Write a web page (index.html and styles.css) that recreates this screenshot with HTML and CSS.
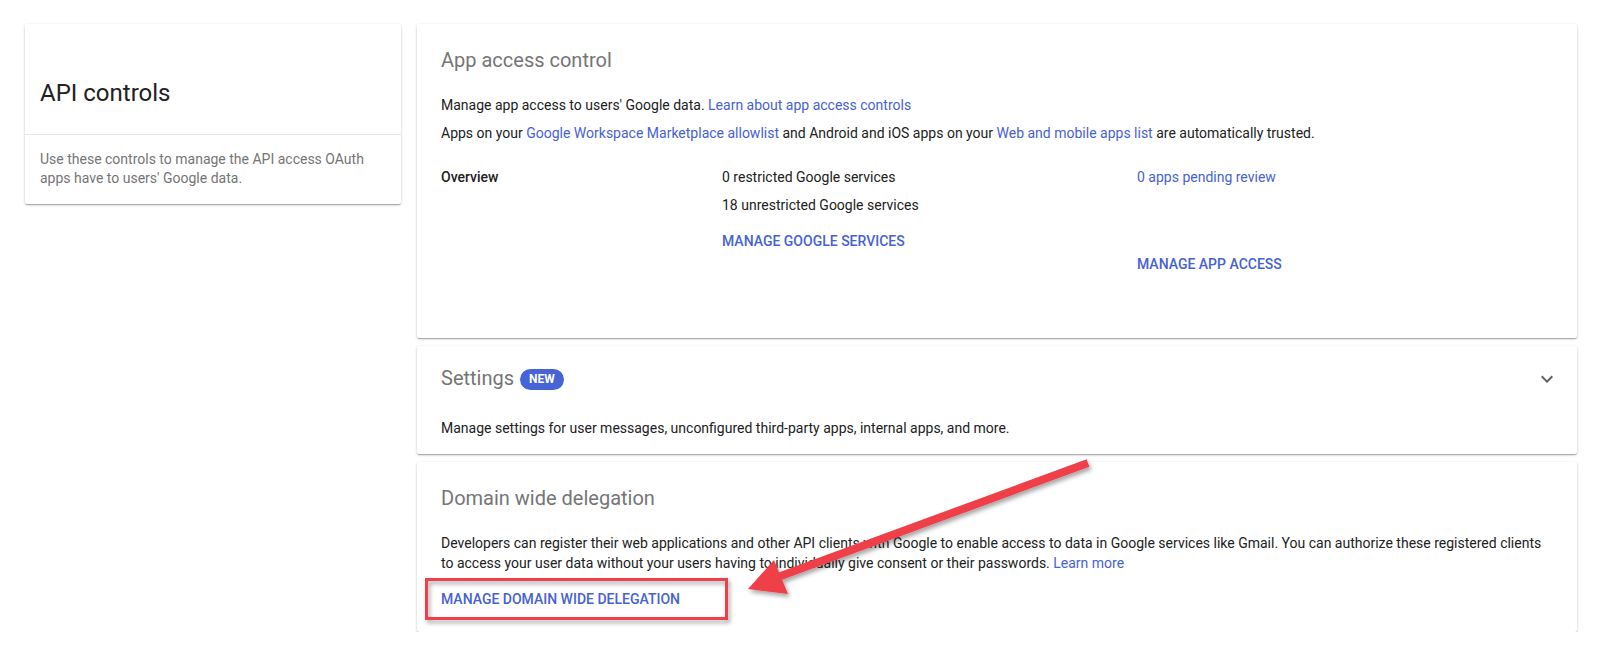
FILE: index.html
```html
<!DOCTYPE html>
<html lang="en">
<head>
  <meta charset="utf-8">
  <title>API controls</title>
  <link rel="stylesheet" href="styles.css">
</head>
<body>
  <div class="page">
    <section class="card intro">
      <div class="intro-head">
        <h1>API controls</h1>
      </div>
      <p class="intro-text">Use these controls to manage the API access OAuth apps have to users' Google data.</p>
    </section>

    <main class="panels">
      <section class="card panel panel-access">
        <h2 class="panel-title">App access control</h2>
        <p class="panel-text lead">Manage app access to users' Google data. <a href="#">Learn about app access controls</a></p>
        <p class="panel-text">Apps on your <a href="#">Google Workspace Marketplace allowlist</a> and Android and iOS apps on your <a href="#">Web and mobile apps list</a> are automatically trusted.</p>
        <div class="overview">
          <div class="overview-label">Overview</div>
          <div class="overview-col">
            <p>0 restricted Google services</p>
            <p class="next">18 unrestricted Google services</p>
            <a class="action" href="#">Manage Google services</a>
          </div>
          <div class="overview-col">
            <a href="#">0 apps pending review</a>
            <a class="action action-low" href="#">Manage app access</a>
          </div>
        </div>
      </section>

      <section class="card panel panel-settings">
        <div class="panel-head">
          <h2 class="panel-title">Settings</h2>
          <span class="badge">NEW</span>
          <svg class="expand" viewBox="0 0 24 24" width="24" height="24"><path d="M16.59 8.59 12 13.17 7.41 8.59 6 10l6 6 6-6z"/></svg>
        </div>
        <p class="panel-text settings-text">Manage settings for user messages, unconfigured third-party apps, internal apps, and more.</p>
      </section>

      <section class="card panel panel-delegation">
        <h2 class="panel-title">Domain wide delegation</h2>
        <p class="panel-text lead">Developers can register their web applications and other API clients with Google to enable access to data in Google services like Gmail. You can authorize these registered clients to access your user data without your users having to individually give consent or their passwords. <a href="#">Learn more</a></p>
        <a class="action delegation-action" href="#">Manage domain wide delegation</a>
      </section>
    </main>

    <!-- annotation drawn over the page -->
    <svg class="callout" width="1611" height="651" viewBox="0 0 1611 651">
      <defs>
        <filter id="shade" x="-10%" y="-10%" width="120%" height="140%">
          <feDropShadow dx="2" dy="3" stdDeviation="2" flood-color="#000" flood-opacity="0.35"/>
        </filter>
      </defs>
      <g filter="url(#shade)" fill="none" stroke="#ef4149">
        <rect x="426.5" y="579.5" width="300" height="39" stroke-width="3"/>
        <line x1="1088" y1="463" x2="778" y2="577" stroke-width="8"/>
        <polygon points="748,589 774,560 788,594" fill="#ef4149" stroke="none"/>
      </g>
    </svg>
  </div>
</body>
</html>
```

FILE: styles.css
```css
html,
body {
  margin: 0;
  background: #fff;
}

body {
  font-family: Roboto, "Noto Sans", Arial, sans-serif;
  font-size: 14px;
  line-height: 20px;
  color: #212121;
}

p {
  margin: 0;
}

a {
  color: #4662d2;
  text-decoration: none;
}

.page {
  position: relative;
  display: flex;
  align-items: flex-start;
  gap: 16px;
  padding: 24px 34px 0 25px;
}

.card {
  background: #fff;
  border-radius: 2px;
  box-shadow:
    0 1px 3px 0 rgba(0, 0, 0, .2),
    0 1px 1px 0 rgba(0, 0, 0, .14),
    0 2px 1px -1px rgba(0, 0, 0, .12);
}

/* left summary card */
.intro {
  width: 376px;
  flex: none;
}

.intro-head {
  padding: 53px 15px 25px;
  border-bottom: 1px solid #e6e6e6;
}

.intro-head h1 {
  margin: 0;
  font-size: 24px;
  line-height: 32px;
  font-weight: 400;
  color: #212121;
}

.intro-text {
  padding: 15px 15px 16px;
  line-height: 19px;
  color: #757575;
}

/* right column */
.panels {
  flex: 1;
  display: flex;
  flex-direction: column;
  gap: 8px;
}

.panel {
  padding: 22px 24px 23px;
}

.panel-title {
  margin: 0;
  font-size: 20px;
  line-height: 28px;
  font-weight: 400;
  color: #757575;
}

.panel-text.lead {
  margin-top: 21px;
}

.panel-text + .panel-text {
  margin-top: 8px;
}

.overview {
  display: grid;
  grid-template-columns: 281px 415px 1fr;
  margin-top: 24px;
}

.overview-label {
  font-weight: 500;
}

.overview-col {
  display: flex;
  flex-direction: column;
  align-items: flex-start;
}

.overview-col .next {
  margin-top: 8px;
}

.action {
  display: block;
  margin-top: 16px;
  font-weight: 500;
  text-transform: uppercase;
}

.action-low {
  margin-top: 67px;
}

.panel-access {
  padding-bottom: 64px;
}

/* settings */
.panel-settings {
  padding-top: 18px;
  padding-bottom: 16px;
}

.panel-head {
  display: flex;
  align-items: center;
  gap: 6px;
}

.badge {
  height: 21px;
  padding: 0 9px;
  border-radius: 11px;
  background: #4664d6;
  color: #fff;
  font-size: 12px;
  line-height: 21px;
  font-weight: 700;
  margin-top: 2px;
}

.expand {
  margin-left: auto;
  margin-right: -6px;
  margin-top: 2px;
  fill: #5f6368;
}

.settings-text {
  margin-top: 26px;
}

/* delegation */
.delegation-action {
  margin-top: 16px;
}

.callout {
  position: absolute;
  top: 0;
  left: 0;
  pointer-events: none;
}
```
